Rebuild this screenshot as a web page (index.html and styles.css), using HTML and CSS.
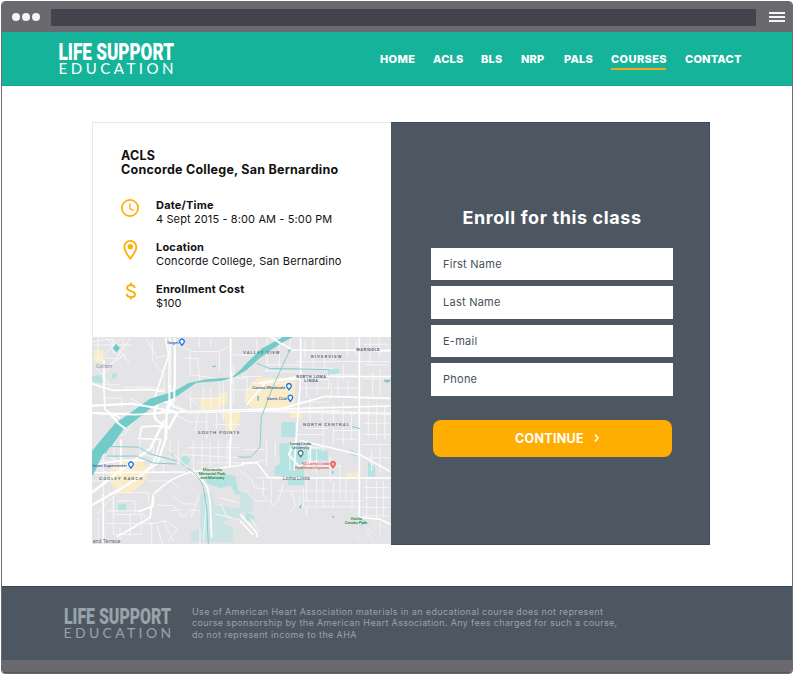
FILE: index.html
```html
<!DOCTYPE html>
<html lang="en">
<head>
<meta charset="utf-8">
<title>Life Support Education</title>
<link rel="stylesheet" href="styles.css">
</head>
<body>
<div class="window">
  <div class="chrome">
    <div class="dots"><i></i><i></i><i></i></div>
    <div class="address"></div>
    <div class="burger"><i></i><i></i><i></i></div>
  </div>
  <header class="header">
    <svg class="logo" viewBox="0 0 116 34">
      <text class="logo-top" x="-0.5" y="17.5" textLength="115.500" lengthAdjust="spacingAndGlyphs">LIFE SUPPORT</text>
      <text class="logo-bottom" x="-0.5" y="32" textLength="115">EDUCATION</text>
    </svg>
    <nav class="nav">
      <a class="n1">HOME</a><a class="n2">ACLS</a><a class="n3">BLS</a><a class="n4">NRP</a><a class="n5">PALS</a><a class="n6 active">COURSES</a><a class="n7">CONTACT</a>
    </nav>
  </header>
  <main class="main">
    <section class="card">
      <div class="details">
        <div class="info">
          <h1 class="title">ACLS<br>Concorde College, San Bernardino</h1>
          <div class="row">
            <svg class="icon" viewBox="0 0 20 20"><circle cx="9" cy="10" r="8.100" fill="none" stroke="#ffad00" stroke-width="1.7"/><path d="M8.8 5.5v5l3.7 2.100" fill="none" stroke="#ffad00" stroke-width="1.3"/></svg>
            <div><b class="t1">Date/Time</b><p class="d1">4 Sept 2015 - 8:00 AM - 5:00 PM</p></div>
          </div>
          <div class="row">
            <svg class="icon" viewBox="0 0 20 20"><path d="M9.300 0.900a6 6 0 0 0-6 6c0 4.200 6 11.700 6 11.700s6-7.500 6-11.700a6 6 0 0 0-6-6z" fill="none" stroke="#ffad00" stroke-width="1.800"/><circle cx="9.300" cy="6.700" r="2.600" fill="#ffad00"/></svg>
            <div><b class="t2">Location</b><p class="d2">Concorde College, San Bernardino</p></div>
          </div>
          <div class="row">
            <svg class="icon" viewBox="0 0 20 20"><path d="M13.600 6c0-2-1.600-2.900-3.700-2.900-2.300 0-3.800 1-3.800 2.800 0 4.200 7.900 2.100 7.900 6.300 0 1.900-1.600 2.900-3.900 2.900-2.500 0-4.200-1.100-4.300-3.200M10 .8v2.600M10 14.800v2.700" fill="none" stroke="#ffad00" stroke-width="1.900"/></svg>
            <div><b class="t3">Enrollment Cost</b><p class="d3">$100</p></div>
          </div>
        </div>
        <svg class="map" viewBox="6 6 897 624" preserveAspectRatio="none">
          <rect x="0" y="0" width="910" height="640" fill="#e4e4e6"/>
          <g fill="#fbecc8">
            <path d="M12 45h28v38H14zM330 190l55-3 4-13h22v30l-26 20h-55zM392 232h58v25l-16 30h-28v-30zM60 400l40-22 58 0 16 38-12 30-40 30-40 0-22-34z"/>
            <path d="M500 130h115v85l-40 8-90-4-22-20 4-30zM600 225l38 4v20h-38zM768 415h42v12h-42z"/>
          </g>
          <g fill="#b5e3e1">
            <path d="M6 124l30-4 2 26-30-4zM66 118l14-6 0 14-10 8-6-4zM84 509h24v21H84zM274 368l12-6 15 14-10 16-17 4zM232 352l22 4-6 12z"/>
            <path d="M328 480l36-6 10 40 80 10v26l-60 12 36 20v42h-128v-30l30-10z" opacity=".5"/>
            <path d="M346 430l60-10 30 5 8 40 10 16-18-2-14-25-30 8-40-14z"/>
            <path d="M450 472l38 8v52h-38z" opacity=".5"/>
            <path d="M714 102h34v18h-34zM574 262h42v46h-42zM568 328l60-4 10 20 76 4v30l-70-3-2 30 0 48h-48v-24l-42-6 4-28 14-6zM778 346l24 8v14l-20-6zM834 382l22 18v28h-22zM470 534l22 12-4 16-24-2zM810 552l20 10-16 20z"/>
          </g>
          <g fill="none" stroke="#f5f6f7" stroke-width="2.800">
            <path d="M6 20l60-8 50 70M48 8l70 74M95 8L25 78M122 8L35 130M70 10v40l24 16M100 12v30M8 30h120M8 70h84M24 8v66M60 90l50-35M18 96l45 60M45 150h45M45 190h50l0 28M25 240l65-3M95 157h90l38 10M187 15v60l35 45v52M200 70l35-12M168 8l34 64M263 30l45 20h80l38-20M300 50v70l80 10M388 48v62M426 60h40M328 8v30M362 10v25M280 70h42l8 70M120 190l55 30M286 180l40 34M302 170v55M340 155v73M362 160v70M388 140v88M310 192h80M325 236l-10 54M350 235v80M380 235v48M400 140v120M430 90v120M436 130h36v54M425 165h90M375 270h76M260 242l36 20 60 0M190 210l-30 25H60M130 260l-25 40-50 12"/>
            <path d="M500 12v60M532 8v100M568 8v88M600 12v30M645 16v54M670 10v86M704 55v44M730 8v70M772 8v60M798 14v50M840 8v80M868 8v60M450 60h60M510 90h120M520 108l116 4M618 80h280M640 100h90M720 120h80M760 88v50M824 90h70M850 50h50M822 28h72M456 125h60M484 145h120M500 160l-36 40M626 135h90v30M634 160h84M650 120v70M682 115v65M724 144v46M744 115v70M774 138v46M730 160h78M820 132h76M848 112v72M870 102v78"/>
            <path d="M626 202h90M660 190v70M696 210v50M730 208v120M760 202v130M784 230v90M650 228h100M645 282h70M700 270v80M616 300h85M728 288h80M736 314h65M835 200v110M860 204v112M884 215v100M818 266h80M820 300h80M845 345v65M870 336v80M818 330h80M826 370h74M680 350v70M720 366v76M750 386v110M640 395h110M650 420v80M680 430v84M700 440v80M730 445v75M768 430v70M640 470h170M640 500h180M628 518h190M628 488v35M650 520v25M786 470v55M830 430v120M860 440v115M880 440v110M820 460h80M820 490h80M820 520h75M820 545h78"/>
            <path d="M40 336v300M72 320v80l90 14M95 318v72M150 318v62M190 320v92M160 360l60 15v42M20 350l64 30M10 380h60M20 395l54 36M6 440h80M240 318v60M265 320v70M215 325l80 75M310 318v100M336 320v85M360 322v75M385 318v65M412 318v70M290 340h160M275 360l175 10M320 385h130"/>
            <path d="M175 440h65l30 20M90 445v20l-70 75M55 475h120v30M70 486v55h84v60H70zM50 530h105M82 500h53v40M90 580v50M120 540v68M155 535l30 38v55M50 568h133M25 550v75M180 570l50-10 32 25-30 40M200 575l18 55M220 560l30 60M200 512l50 3 28 35 25-25 25 6M250 485l30 24 34 0M240 530l32-3M330 480l-28 70M330 585v45M350 500l-10 120M392 510l20 40 36 7M385 490l60 15M375 540l50 10"/>
            <path d="M450 410l35 25 8 25 40 5M500 430h130M520 436v50l25 22M544 440v65M560 470h76M580 450l-15 50-24 18M604 470l12 45-16 18M640 460v55M470 470l25 30 35 0M480 550l30 45M600 330v80M620 340h80M655 315v80M556 318v50M530 320v76M460 345h65M470 390l60-15"/>
            <path d="M790 600l25 24M820 574l40 30M850 565l48 20M830 590l20 38M870 550v60" opacity=".65"/>
          </g>
          <g fill="none" stroke="#fff" stroke-width="5">
            <path d="M42 75v90l3 60 45 25M6 213l120-6 75 13 60 13 190-7 450-12M6 235l130 5 120-8 150-5 170-6 130-36 195 6"/>
            <path d="M6 147l64 20 110-3 42 7M422 8v322M632 8v120l-16 220-3 60M808 8v545M186 215l50-155-10-52M548 8l60 38h295M508 145l120-20h275M470 210l60-70 100-10"/>
            <path d="M6 392l90-14h70M6 415l280-2M40 480v145M92 315v110M420 315v80"/>
            <path d="M147 315l8-38 45-3 38 8M150 312l62 3-18 66-60 60M190 485l0 30-45 18M193 478q50-50 110-65l160-22M298 410q40 20 54 50l8 40 5 110M453 386l48-1 35 45 372 1M630 318l180 43 90 50M808 550l60 5 35 16M620 315l-24 45 30 35 35-10 0-52M450 540l45 50q10 15 5 20M450 560l40 43M190 480l-10 70-50 30-50 28"/>
          </g>
          <g fill="none" stroke="#fff" stroke-width="7.500">
            <path d="M240 8l-2 140 12 66 45 19 170-5 438 9M254 8v155l-24 60-5 95-23 68-90 65L6 512M260 170l-30 60-2 86M6 475l75-58 100-75 42-85M205 237q30-20 56 0l-25 45M250 214q-40-30-54 8t34 50"/>
            <path d="M60 238l34 35-28 40-46 34"/>
          </g>
          <g fill="none" stroke="#d9dee3" stroke-width="1.200">
            <path d="M240 8l-2 140 12 66 45 19 170-5 438 9M250 12v150l-24 60-5 95-23 68-90 65L6 508"/>
          </g>
          <path fill="#72cbc8" d="M68 40l10-14 12 13-10 14zM366 94l12-2v4l-8 2zM22 330L75 266l22-14L180 192l56-17 18-6 42-24 54-12 75-5 27-24 30-32 35-32 44-24 18-10h30l-34 18-30 20-36 26-40 36-34 20-40 12-76 6L255 188 190 214 140 255 100 285 68 330 36 364 10 422H6v-72zM628 515l6-4v11h-6zM727 545h4l2 6h-5zM592 45l12-2-6 10zM502 184h5v14h-5zM726 410h4v8h-4z"/>
          <path fill="none" stroke="#fff" stroke-width="6" d="M238 150v60M253 150v50M424 110v40M540 4l36 24M6 213l120-6 75 13M6 235l130 5 120-8M80 262l28 22"/>
          <g fill="none" stroke="#80cfcd" stroke-width="3">
            <path d="M45 358l14-22 86 2 40 22 76 20M50 365h90l50 21 70 3M290 400q40 22 50 60l10 60 5 110M500 85l38 16 180 3M598 48l-48 105-36 94-4 91-28 30h-38M786 276l24 6"/>
          </g>
          <g class="place">
            <text x="324" y="299" textLength="124">SOUTH POINTE</text>
            <text x="459" y="57" textLength="110">VALLEY VIEW</text>
            <text x="663" y="70" textLength="92">RIVERVIEW</text>
            <text class="strong" x="799" y="47" textLength="70">MARIGOLD</text>
            <text class="strong" x="619" y="129" textLength="89">NORTH LOMA</text>
            <text class="strong" x="643" y="141" textLength="41">LINDA</text>
            <text x="639" y="274" textLength="138">NORTH CENTRAL</text>
            <text x="28" y="437" textLength="129">COOLEY RANCH</text>
          </g>
          <g class="town">
            <text x="18" y="98" textLength="48" opacity=".75">Colton</text>
            <text x="578" y="438" textLength="81">Loma Linda</text>
            <text x="8" y="627" textLength="83">and Terrace</text>
          </g>
          <g class="poi">
            <text x="230" y="27" textLength="36">Target</text>
            <text x="487" y="162" textLength="99">Costco Wholesale</text>
            <text x="530" y="197" textLength="61">Sam's Club</text>
            <text x="8" y="398" textLength="103">lmart Supercenter</text>
            <text x="882" y="142" fill="#45a5a8">Spl</text>
            <g fill="#3d6671"><text x="600" y="332" textLength="63">Loma Linda</text><text x="605" y="345" textLength="53">University</text></g>
            <g fill="#e2605c"><text x="635" y="392" textLength="83">VA Loma Linda</text><text x="615" y="404" textLength="103">Healthcare System</text></g>
            <g fill="#268540"><text x="338" y="409" textLength="58">Montecito</text><text x="326" y="422" textLength="80">Memorial Park</text><text x="331" y="434" textLength="72">and Mortuary</text><text x="782" y="557" textLength="34">Hulda</text><text x="764" y="570" textLength="68">Crooks Park</text></g>
          </g>
          <g stroke-width="4" fill="#fff">
            <path d="M276 31l-6-8a7 7 0 1 1 12 0z" stroke="#1976e8"/>
            <path d="M597 165l-6-8a7 7 0 1 1 12 0z" stroke="#1976e8"/>
            <path d="M601 200l-6-8a7 7 0 1 1 12 0z" stroke="#1976e8"/>
            <path d="M123 401l-6-8a7 7 0 1 1 12 0z" stroke="#1976e8"/>
            <path d="M632 367l-6-8a7 7 0 1 1 12 0z" stroke="#527886"/>
            <path d="M729 400l-6-8a7 7 0 1 1 12 0z" stroke="#ea5753" fill="#f7aaa7"/>
          </g>
        </svg>
      </div>
      <form class="enroll">
        <h2 class="enroll-title">Enroll for this class</h2>
        <div class="field f1">First Name</div>
        <div class="field f2">Last Name</div>
        <div class="field f3">E-mail</div>
        <div class="field f4">Phone</div>
        <div class="button"><span>CONTINUE</span><svg viewBox="0 0 6 10"><path d="M1 1.500l3 3.500-3 3.500" fill="none" stroke="#fff" stroke-width="1.500"/></svg></div>
      </form>
    </section>
  </main>
  <footer class="footer">
    <svg class="logo small" viewBox="0 0 116 34">
      <text class="logo-top" x="0" y="17.5" textLength="115" lengthAdjust="spacingAndGlyphs">LIFE SUPPORT</text>
      <text class="logo-bottom" x="-0.5" y="32" textLength="115.5">EDUCATION</text>
    </svg>
    <p class="legal"><span class="l1">Use of American Heart Association materials in an educational course does not represent</span><br><span class="l2">course sponsorship by the American Heart Association. Any fees charged for such a course,</span><br><span class="l3">do not represent income to the AHA</span></p>
  </footer>
  <div class="base"></div>
</div>
</body>
</html>
```
FILE: styles.css
```css
* { box-sizing: border-box; }
body { margin: 0; background: #fff; font-family: Inter, "Open Sans", sans-serif; color: #111; }
p, h1, h2 { margin: 0; }
.window { width: 792px; height: 673px; margin: 1px 0 0 1px; border: 1px solid #6b6a70; border-radius: 4px; overflow: hidden; display: flex; flex-direction: column; }
.chrome { height: 30px; background: #6a696e; display: flex; align-items: center; padding-left: 10px; flex: none; }
.dots { display: flex; gap: 2px; width: 39px; }
.dots i { width: 8px; height: 8px; border-radius: 50%; background: #f4f4f6; }
.address { width: 705px; height: 17px; background: #44424b; border-radius: 1px; }
.burger { margin-left: 13px; width: 16px; display: flex; flex-direction: column; gap: 2px; }
.burger i { height: 2px; background: #f4f4f6; }
.header { height: 54px; flex: none; background: #16b39b; display: flex; align-items: flex-start; padding: 10px 0 0 57px; color: #fff; border-bottom: 1px solid #10a890; }
.logo { width: 116px; height: 34px; display: block; fill: #fff; overflow: visible; flex: none; }
.logo-top { font: 900 24px Roboto, sans-serif; }
.logo-bottom { font: 400 15px Lato, sans-serif; }
.nav { display: flex; padding-top: 9.5px; margin-left: 205px; font-size: 11px; line-height: 14px; font-weight: 800; letter-spacing: .2px; }
.nav a { white-space: nowrap; height: 17px; flex: none; }
.n1 { width: 53px; letter-spacing: .35px; }
.n2 { width: 48px; }
.n3 { width: 40px; }
.n4 { width: 43px; }
.n5 { width: 47px; }
.n6 { width: 55px; margin-right: 19px; letter-spacing: .4px; }
.nav .active { border-bottom: 2px solid #f5a81c; height: 18px; }
.main { height: 500.4px; flex: none; padding: 36.4px 0 0 90px; }
.card { width: 618px; height: 422.2px; display: flex; }
.details { width: 299px; flex: none; }
.info { height: 215px; border: 1px solid #e9e9eb; border-right: 0; border-bottom: 0; padding: 25.2px 0 0 28px; }
.title { font-size: 12.5px; line-height: 14px; font-weight: 700; letter-spacing: .24px; margin-bottom: 21px; white-space: nowrap; }
.row { display: flex; height: 42px; font-size: 11px; line-height: 14px; white-space: nowrap; }
.row b { display: block; font-weight: 700; letter-spacing: .2px; }
.d1 { letter-spacing: .12px; }
.d2 { letter-spacing: .18px; }
.icon { width: 20px; height: 20px; margin-right: 15px; flex: none; }
.map { display: block; width: 299px; height: 207px; font-family: Roboto, sans-serif; }
.place { font-size: 13px; fill: #4c5c70; font-weight: 500; }
.place .strong { font-size: 12px; font-weight: 700; }
.town { font-size: 15px; fill: #5c6b7a; }
.poi { font-size: 13px; fill: #3e68aa; font-weight: 500; }
.enroll { width: 319px; background: #4d5761; border: 1px solid #3f4a55; border-left: 0; padding: 82.5px 0 0 40px; }
.enroll-title { width: 242px; text-align: center; color: #fff; font-size: 18px; line-height: 24px; font-weight: 700; letter-spacing: .6px; margin-bottom: 18px; white-space: nowrap; }
.field { width: 242px; height: 32.5px; margin-bottom: 6px; background: #fff; color: #46505b; font-size: 11px; line-height: 32px; padding-left: 12px; letter-spacing: .25px; }
.button { width: 239px; height: 37px; margin: 24px 0 0 2px; background: #ffad00; border-radius: 8px; color: #fff; font-size: 12.5px; font-weight: 700; letter-spacing: .3px; display: flex; align-items: center; padding-left: 82px; }
.button svg { width: 6px; height: 10px; margin-left: 10.5px; }
.footer { height: 73.6px; flex: none; background: #4d5761; border-top: 1px solid #35414d; display: flex; padding: 20.4px 0 0 62px; }
.small { width: 108px; height: 31.7px; fill: #9aa2aa; }
.legal { margin-left: 20px; font-size: 9px; line-height: 11.2px; color: #9aa2aa; white-space: nowrap; letter-spacing: .36px; margin-top: -1.5px; }
.base { flex: 1; background: #6a696e; border-bottom: 1px solid #57565b; }
```
